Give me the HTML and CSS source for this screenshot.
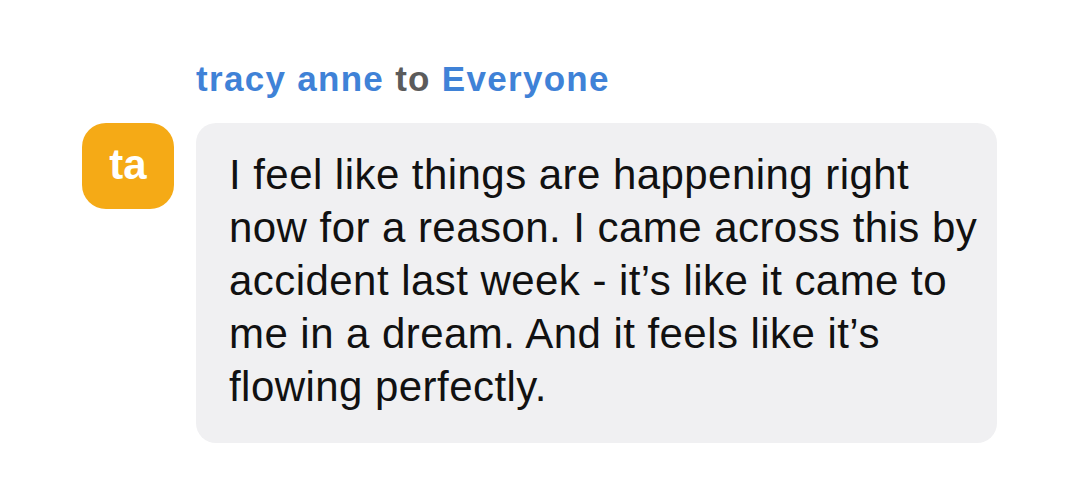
FILE: index.html
```html
<!DOCTYPE html>
<html>
<head>
<meta charset="utf-8">
<link rel="stylesheet" href="styles.css">
</head>
<body>
<div class="chat">
  <div class="sender"><span class="name">tracy anne</span> <span class="to">to</span> <span class="name">Everyone</span></div>
  <div class="avatar">ta</div>
  <div class="bubble">I feel like things are happening right now for a reason. I came across this by accident last week - it’s like it came to me in a dream. And it feels like it’s flowing perfectly.</div>
</div>
</body>
</html>
```
FILE: styles.css
```css
html, body {
  margin: 0;
  padding: 0;
  background: #ffffff;
}
body {
  font-family: "Liberation Sans", Arial, sans-serif;
}
.chat {
  display: grid;
  grid-template-columns: 92px 801px;
  column-gap: 22px;
  row-gap: 24px;
  padding: 59px 0 0 82px;
}
.sender {
  grid-column: 2;
  grid-row: 1;
  font-size: 35px;
  line-height: 40px;
  font-weight: 700;
  letter-spacing: 1.3px;
  white-space: nowrap;
}
.name {
  color: #3f82d7;
}
.to {
  color: #5b5b5b;
}
.avatar {
  grid-column: 1;
  grid-row: 2;
  width: 92px;
  height: 86px;
  border-radius: 24px;
  background: #f5aa16;
  color: #ffffff;
  font-weight: 700;
  font-size: 42px;
  display: flex;
  align-items: center;
  justify-content: center;
  padding-bottom: 2px;
  box-sizing: border-box;
}
.bubble {
  grid-column: 2;
  grid-row: 2;
  background: #f0f0f2;
  border-radius: 20px;
  padding: 25px 14px 30px 33px;
  font-size: 42px;
  line-height: 53px;
  letter-spacing: 0.45px;
  color: #111111;
}
```
